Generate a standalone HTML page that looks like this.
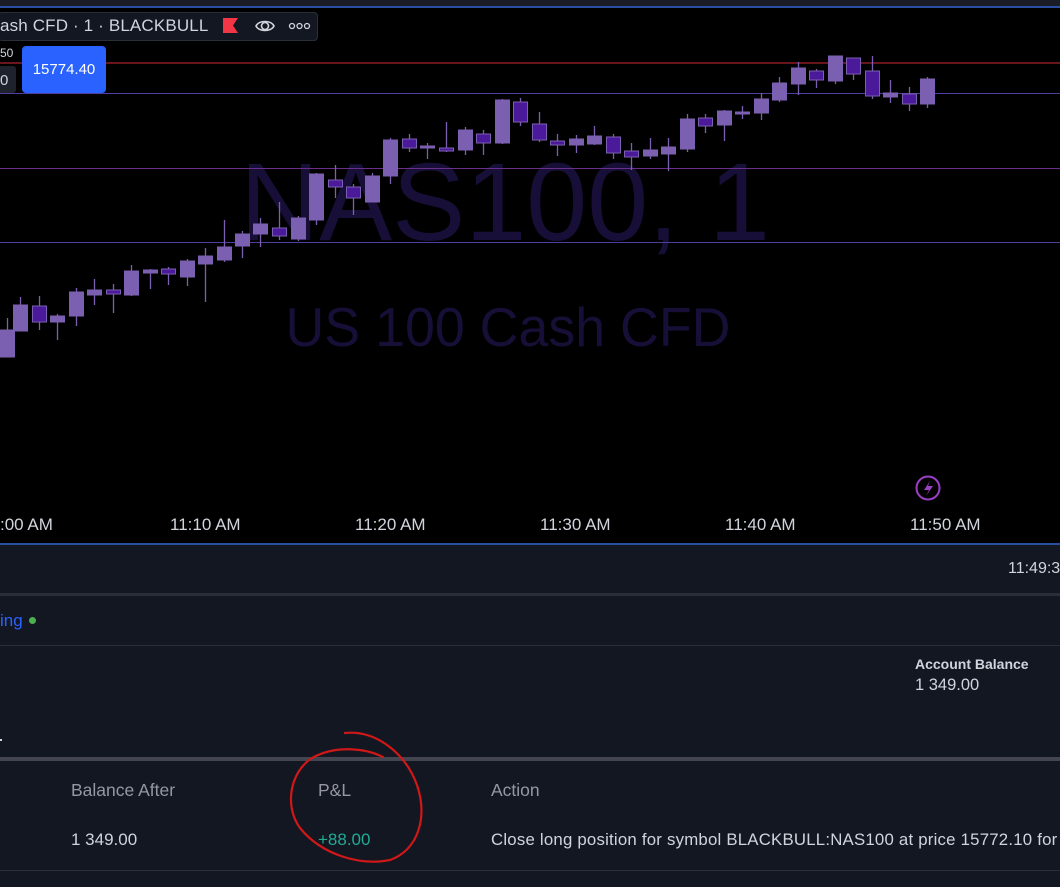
<!DOCTYPE html>
<html><head><meta charset="utf-8"><style>
*{margin:0;padding:0;box-sizing:border-box}
body{width:1060px;height:887px;overflow:hidden;background:#131722;font-family:"Liberation Sans",sans-serif;position:relative}
.a{position:absolute;white-space:nowrap}
</style></head><body>
<div class="a" style="left:0;top:0;width:1060px;height:544px;background:#000"></div>
<div class="a" style="left:0;top:0;width:1060px;height:6px;background:#1a1d26"></div>
<div class="a" style="left:0;top:6px;width:1060px;height:2px;background:#2a4ea0"></div>
<svg class="a" style="left:0;top:0" width="1060" height="544">
<text x="505" y="240" font-family="Liberation Sans" font-size="110" fill="#170f38" text-anchor="middle" textLength="530" lengthAdjust="spacingAndGlyphs">NAS100, 1</text>
<text x="508" y="346" font-family="Liberation Sans" font-size="55" fill="#170f38" text-anchor="middle" textLength="445" lengthAdjust="spacingAndGlyphs">US 100 Cash CFD</text>
<line x1="0" y1="63" x2="1060" y2="63" stroke="#8a1e24" stroke-width="1.5"/>
<line x1="0" y1="93.5" x2="1060" y2="93.5" stroke="#4e3f9e" stroke-width="1"/>
<line x1="0" y1="168.5" x2="1060" y2="168.5" stroke="#6a2f8a" stroke-width="1"/>
<line x1="0" y1="242.5" x2="1060" y2="242.5" stroke="#4e3f9e" stroke-width="1"/>
<g id="c"></g>
<circle cx="928" cy="488" r="11.5" fill="none" stroke="#9b3fc4" stroke-width="2"/>
<path d="M930 481 L924 490 L929 490 L926 496 L933 486 L928 486 Z" fill="#9b3fc4"/>
<g font-family="Liberation Sans" font-size="17" fill="#d1d4dc">
<text x="0" y="530">:00 AM</text><text x="170" y="530">11:10 AM</text><text x="355" y="530">11:20 AM</text><text x="540" y="530">11:30 AM</text><text x="725" y="530">11:40 AM</text><text x="910" y="530">11:50 AM</text>
</g>
</svg>
<div class="a" style="left:-2px;top:12px;width:320px;height:29px;background:#131722;border:1px solid #2a2e39;border-radius:4px"></div>
<div class="a" style="left:0;top:16px;font-size:17px;letter-spacing:0.15px;color:#d1d4dc">ash CFD · 1 · BLACKBULL</div>
<svg class="a" style="left:222px;top:17px" width="18" height="18"><path d="M1 1H16L11 8.5L16 16H1Z" fill="#f23645"/></svg>
<svg class="a" style="left:254px;top:15px" width="22" height="22"><path d="M2 11C5 5 17 5 20 11C17 17 5 17 2 11Z" fill="none" stroke="#d1d4dc" stroke-width="1.6"/><circle cx="11" cy="11" r="3.5" fill="none" stroke="#d1d4dc" stroke-width="1.6"/></svg>
<svg class="a" style="left:288px;top:20px" width="24" height="12"><g fill="none" stroke="#d1d4dc" stroke-width="1.3"><circle cx="4" cy="6" r="2.5"/><circle cx="11.5" cy="6" r="2.5"/><circle cx="19" cy="6" r="2.5"/></g></svg>
<div class="a" style="left:0;top:46px;font-size:12px;color:#d1d4dc">50</div>
<div class="a" style="left:-4px;top:66px;width:20px;height:27px;background:#1e222d;border-radius:3px;color:#d1d4dc;font-size:15px;padding:6px 0 0 4px">0</div>
<div class="a" style="left:22px;top:46px;width:84px;height:47px;background:#2962ff;border-radius:4px;color:#fff;font-size:15px;text-align:center;padding-top:15px">15774.40</div>
<div class="a" style="left:0;top:543px;width:1060px;height:2px;background:#2a4ea0"></div>
<div class="a" style="left:1008px;top:560px;font-size:16px;color:#d1d4dc">11:49:3</div>
<div class="a" style="left:0;top:593px;width:1060px;height:3px;background:#2a2e39"></div>
<div class="a" style="left:0;top:611px;font-size:17px;color:#2962ff">ing</div>
<div class="a" style="left:29px;top:617px;width:7px;height:7px;border-radius:50%;background:#4caf50"></div>
<div class="a" style="left:0;top:645px;width:1060px;height:1px;background:#2a2e39"></div>
<div class="a" style="left:915px;top:656px;font-size:14px;font-weight:bold;color:#d1d4dc">Account Balance</div>
<div class="a" style="left:915px;top:676px;font-size:16.5px;color:#d1d4dc">1 349.00</div>
<div class="a" style="left:0;top:739px;width:2px;height:2px;background:#d1d4dc"></div>
<div class="a" style="left:0;top:757px;width:1060px;height:4px;background:#434651"></div>
<div class="a" style="left:71px;top:780px;font-size:17.5px;color:#9598a1">Balance After</div>
<div class="a" style="left:318px;top:780px;font-size:17.5px;color:#9598a1">P&amp;L</div>
<div class="a" style="left:491px;top:780px;font-size:17.5px;color:#9598a1">Action</div>
<div class="a" style="left:71px;top:830px;font-size:17px;color:#d1d4dc">1 349.00</div>
<div class="a" style="left:318px;top:830px;font-size:17px;color:#22ab94">+88.00</div>
<div class="a" style="left:491px;top:830px;font-size:16.8px;letter-spacing:0.22px;color:#d1d4dc">Close long position for symbol BLACKBULL:NAS100 at price 15772.10 for</div>
<div class="a" style="left:0;top:870px;width:1060px;height:1px;background:#2a2e39"></div>
<svg class="a" style="left:0;top:0" width="1060" height="887"><path d="M345 733 C375 730 405 752 417 785 C428 818 418 850 390 860 C360 866 322 855 300 828 C284 806 290 772 312 758 C335 745 365 748 383 757" fill="none" stroke="#d01818" stroke-width="2.2" stroke-linecap="round"/></svg>
<script>
var d=[[0,330,357,318,357,'L'],[13,305,331,297,331,'L'],[32,306,322,296,330,'D'],[50,316,322,314,340,'L'],[69,292,316,288,326,'L'],[87,290,295,279,305,'L'],[106,290,294,284,313,'D'],[124,271,295,265,296,'L'],[143,270,273,269,289,'L'],[161,269,274,267,285,'D'],[180,261,277,259,286,'L'],[198,256,264,248,302,'L'],[217,247,260,220,262,'L'],[235,234,246,231,258,'L'],[253,224,234,218,247,'L'],[272,228,236,202,240,'D'],[291,218,239,216,241,'L'],[309,174,220,173,225,'L'],[328,180,187,165,198,'D'],[346,187,198,184,215,'D'],[365,176,202,173,202,'L'],[383,140,176,138,184,'L'],[402,139,148,134,152,'D'],[420,146,148,143,159,'L'],[439,148,151,122,152,'D'],[458,130,150,127,155,'L'],[476,134,143,130,155,'D'],[495,100,143,99,144,'L'],[513,102,122,98,126,'D'],[532,124,140,112,142,'D'],[550,141,145,134,156,'D'],[569,139,145,135,153,'L'],[587,136,144,126,145,'L'],[606,137,153,134,159,'D'],[624,151,157,143,170,'D'],[643,150,156,138,159,'L'],[661,147,154,138,171,'L'],[680,119,149,114,152,'L'],[698,118,126,114,133,'D'],[717,111,125,110,141,'L'],[735,112,114,106,119,'L'],[754,99,113,93,120,'L'],[772,83,100,77,102,'L'],[791,68,84,62,95,'L'],[809,71,80,69,88,'D'],[828,56,81,56,84,'L'],[846,58,74,58,80,'D'],[865,71,96,56,99,'D'],[883,93,97,80,103,'L'],[902,94,104,87,111,'D'],[920,79,104,77,108,'L']];
var s='';d.forEach(function(c){var cx=c[0]+7.5;s+='<line x1="'+cx+'" y1="'+c[3]+'" x2="'+cx+'" y2="'+c[4]+'" stroke="#7b5fb0" stroke-width="1.3"/>';s+='<rect x="'+(c[0]+0.5)+'" y="'+c[1]+'" width="14" height="'+Math.max(2,c[2]-c[1])+'" fill="'+(c[5]=='L'?'#7b5fb0':'#4a1a9a')+'" stroke="#7b5fb0" stroke-width="1"/>';});
document.getElementById('c').innerHTML=s;
</script>
</body></html>
